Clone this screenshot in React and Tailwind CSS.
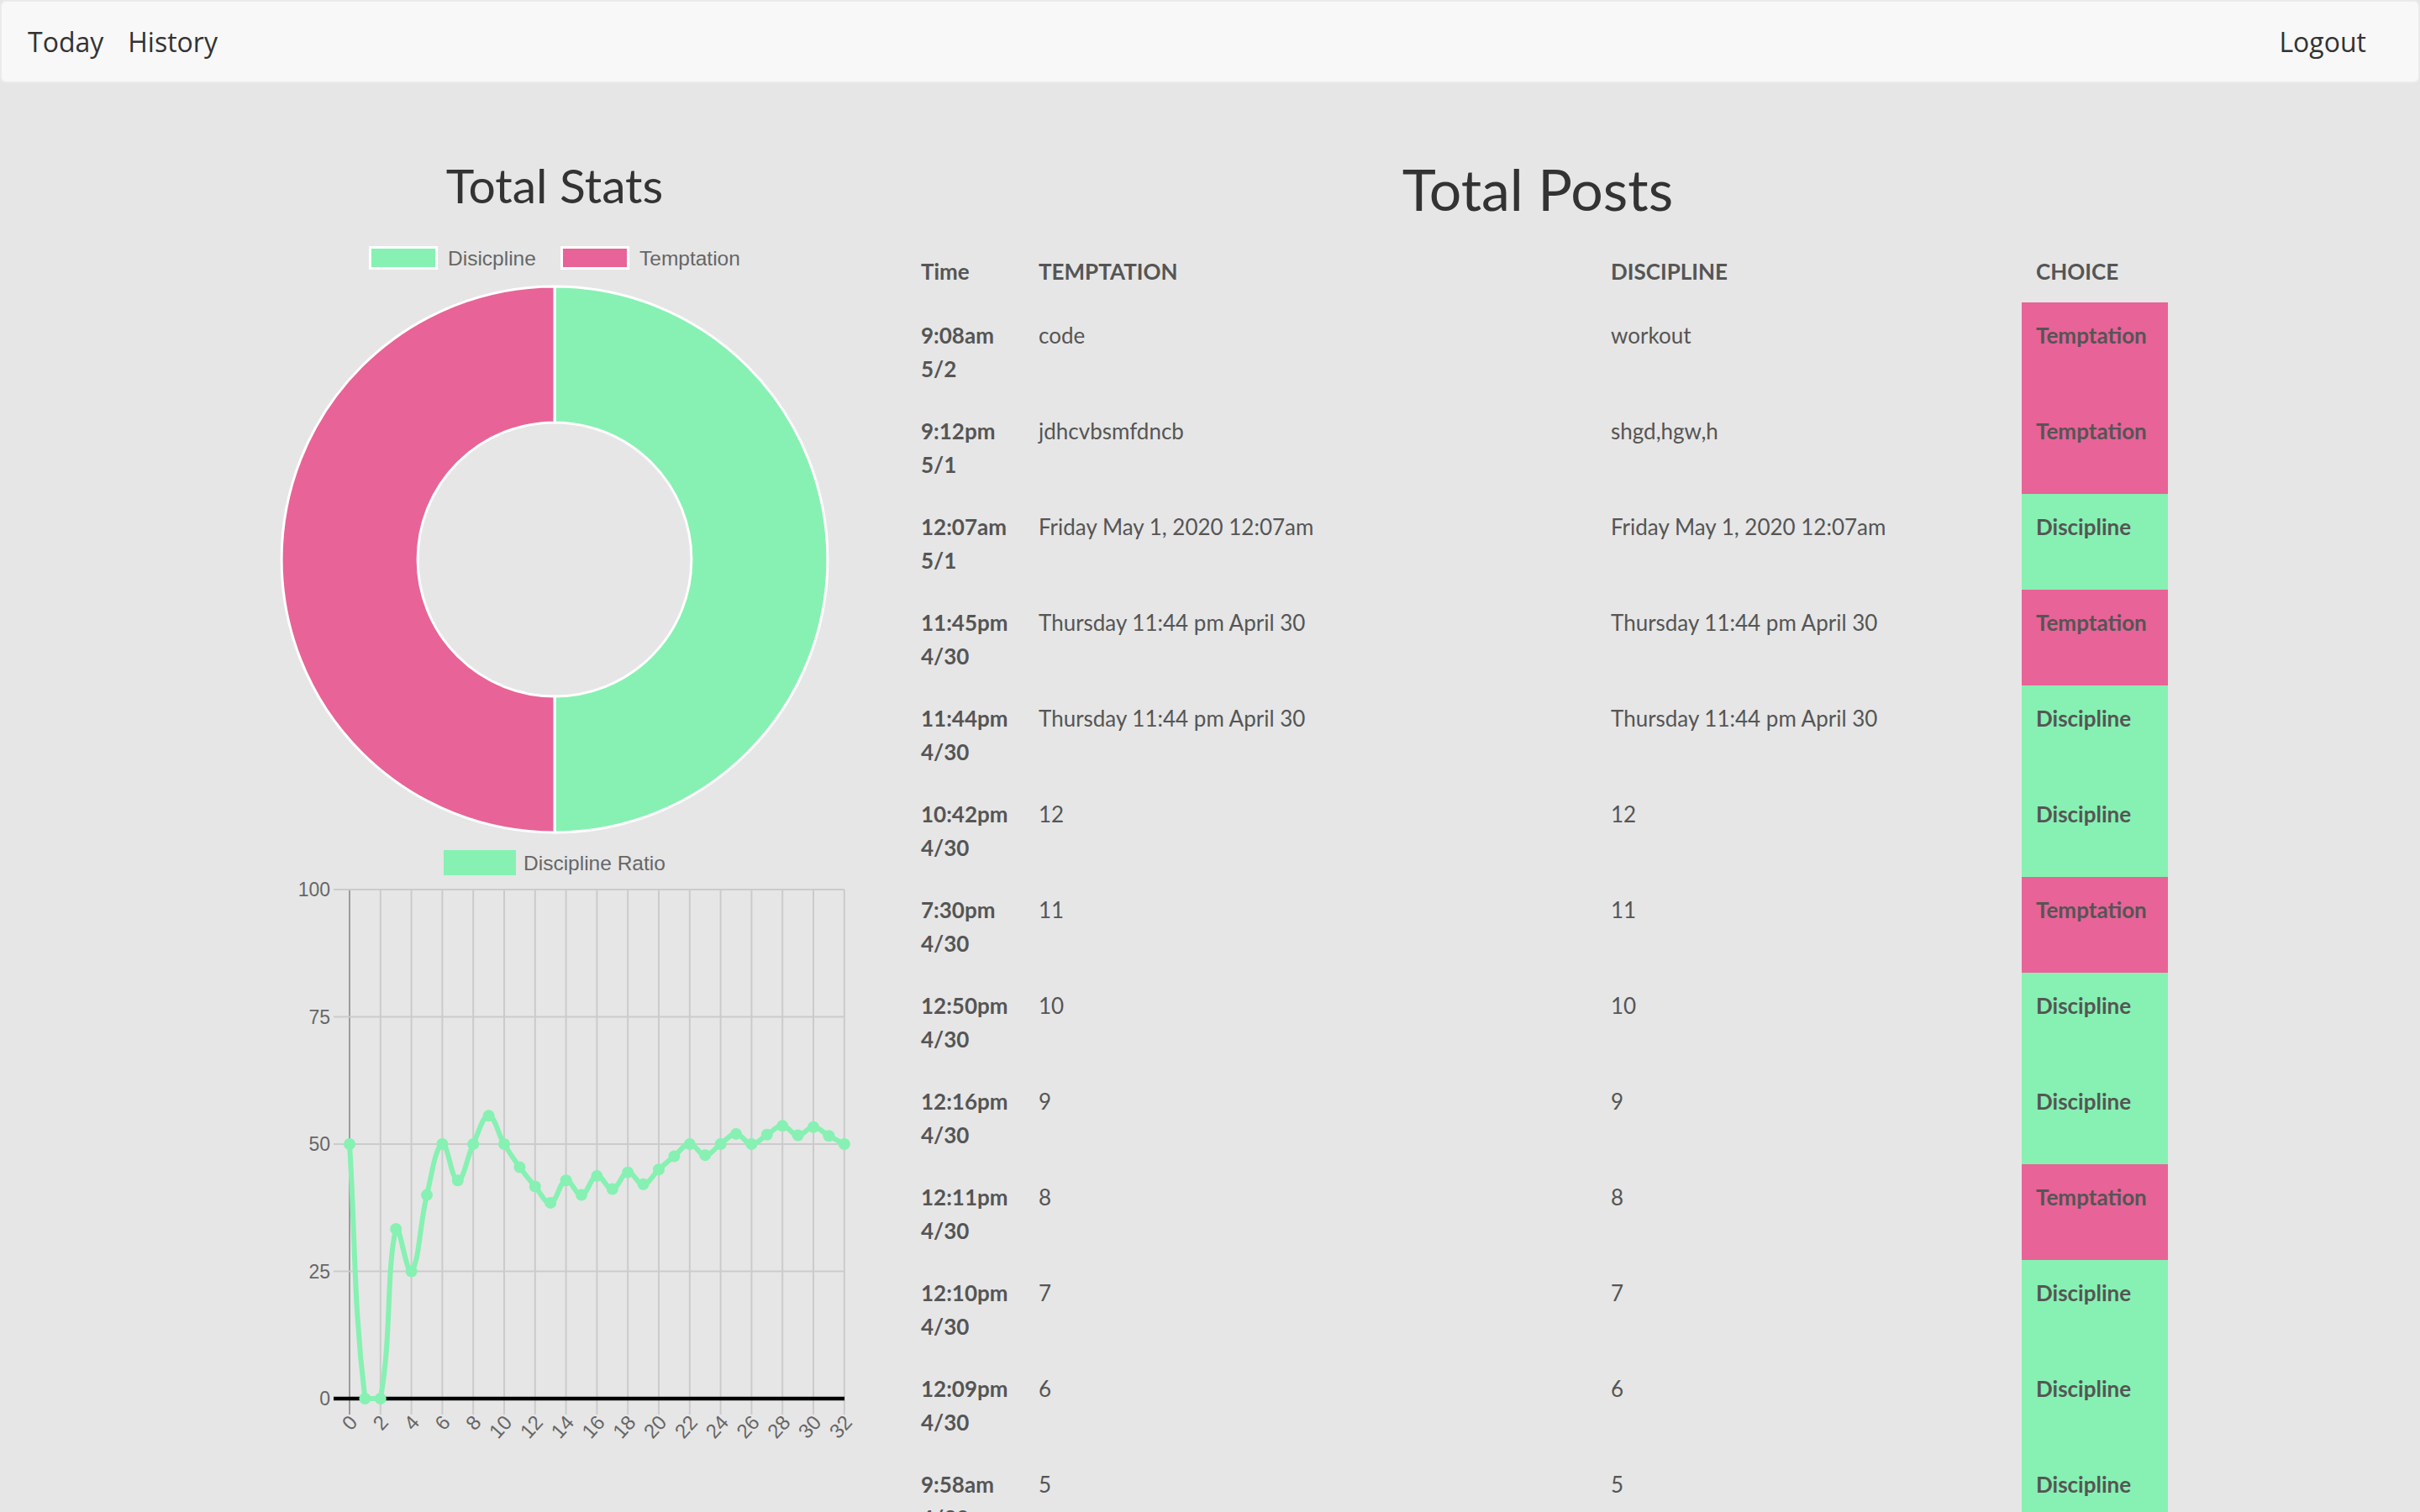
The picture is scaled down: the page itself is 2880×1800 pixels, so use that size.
import React from "react";

const GREEN = "#86f1b2";
const PINK = "#e86397";

const rows = [
  ["9:08am", "5/2", "code", "workout", "T"],
  ["9:12pm", "5/1", "jdhcvbsmfdncb", "shgd,hgw,h", "T"],
  ["12:07am", "5/1", "Friday May 1, 2020 12:07am", "Friday May 1, 2020 12:07am", "D"],
  ["11:45pm", "4/30", "Thursday 11:44 pm April 30", "Thursday 11:44 pm April 30", "T"],
  ["11:44pm", "4/30", "Thursday 11:44 pm April 30", "Thursday 11:44 pm April 30", "D"],
  ["10:42pm", "4/30", "12", "12", "D"],
  ["7:30pm", "4/30", "11", "11", "T"],
  ["12:50pm", "4/30", "10", "10", "D"],
  ["12:16pm", "4/30", "9", "9", "D"],
  ["12:11pm", "4/30", "8", "8", "T"],
  ["12:10pm", "4/30", "7", "7", "D"],
  ["12:09pm", "4/30", "6", "6", "D"],
  ["9:58am", "4/30", "5", "5", "D"],
  ["9:40am", "4/30", "4", "4", "D"],
  ["9:12am", "4/30", "3", "3", "T"],
];

const ratios = [
  50, 0, 0, 1 / 3, 1 / 4, 2 / 5, 3 / 6, 3 / 7, 4 / 8, 5 / 9, 5 / 10, 5 / 11, 5 / 12, 5 / 13,
  6 / 14, 6 / 15, 7 / 16, 7 / 17, 8 / 18, 8 / 19, 9 / 20, 10 / 21, 11 / 22, 11 / 23, 12 / 24,
  13 / 25, 13 / 26, 14 / 27, 15 / 28, 15 / 29, 16 / 30, 16 / 31, 16 / 32,
].map((v, i) => (i === 0 ? 50 : v * 100));

const X0 = 416;
const XSTEP = 18.4;
const Y0 = 1664;
const YTOP = 1058;
const YU = (Y0 - YTOP) / 100;

function buildPath() {
  const pts = ratios.map((v, i) => ({ x: X0 + i * XSTEP, y: Y0 - v * YU }));
  const t = 0.4;
  const cps = pts.map((p, i) => {
    const prev = pts[i - 1] || p;
    const next = pts[i + 1] || p;
    const d01 = Math.hypot(p.x - prev.x, p.y - prev.y);
    const d12 = Math.hypot(next.x - p.x, next.y - p.y);
    let s01 = d01 / (d01 + d12);
    let s12 = d12 / (d01 + d12);
    if (isNaN(s01)) s01 = 0;
    if (isNaN(s12)) s12 = 0;
    const fa = t * s01;
    const fb = t * s12;
    const cap = (y) => Math.max(YTOP, Math.min(Y0, y));
    return {
      prev: { x: p.x - fa * (next.x - prev.x), y: cap(p.y - fa * (next.y - prev.y)) },
      next: { x: p.x + fb * (next.x - prev.x), y: cap(p.y + fb * (next.y - prev.y)) },
    };
  });
  let d = `M ${pts[0].x} ${pts[0].y}`;
  for (let i = 1; i < pts.length; i++) {
    d += ` C ${cps[i - 1].next.x} ${cps[i - 1].next.y} ${cps[i].prev.x} ${cps[i].prev.y} ${pts[i].x} ${pts[i].y}`;
  }
  return { d, pts };
}

function Donut() {
  const cx = 660;
  const cy = 665;
  const R = 325;
  const r = 163;
  const right = `M ${cx} ${cy - R} A ${R} ${R} 0 0 1 ${cx} ${cy + R} L ${cx} ${cy + r} A ${r} ${r} 0 0 0 ${cx} ${cy - r} Z`;
  const left = `M ${cx} ${cy + R} A ${R} ${R} 0 0 1 ${cx} ${cy - R} L ${cx} ${cy - r} A ${r} ${r} 0 0 0 ${cx} ${cy + r} Z`;
  return (
    <svg width="726" height="746" viewBox="297 254 726 746" className="block">
      <g style={{ fontFamily: '"Liberation Sans", Arial, sans-serif' }} fontSize="24.5" fill="#666">
        <rect x="440.5" y="293.5" width="79" height="25" fill={GREEN} stroke="#fff" strokeWidth="3" />
        <text x="533" y="315">Disicpline</text>
        <rect x="668.5" y="293.5" width="79" height="25" fill={PINK} stroke="#fff" strokeWidth="3" />
        <text x="761" y="315">Temptation</text>
      </g>
      <path d={right} fill={GREEN} stroke="#fff" strokeWidth="3" strokeLinejoin="round" />
      <path d={left} fill={PINK} stroke="#fff" strokeWidth="3" strokeLinejoin="round" />
    </svg>
  );
}

function LineChart() {
  const { d, pts } = buildPath();
  const vlines = Array.from({ length: 17 }, (_, k) => X0 + k * 2 * XSTEP);
  const ylabels = [100, 75, 50, 25, 0];
  return (
    <svg width="726" height="760" viewBox="297 1000 726 760" className="block">
      <g style={{ fontFamily: '"Liberation Sans", Arial, sans-serif' }} fontSize="23" fill="#666">
        <rect x="528" y="1011" width="86" height="30" fill={GREEN} />
        <text x="623" y="1035" fontSize="24.5">Discipline Ratio</text>
        {vlines.map((x, k) => (
          <line key={k} x1={x} y1={YTOP} x2={x} y2={1683} stroke={k === 0 ? "#9c9c9c" : "#cbcbcb"} strokeWidth="2" />
        ))}
        {ylabels.slice(0, 4).map((v) => (
          <line key={v} x1={397} y1={Y0 - v * YU} x2={1005} y2={Y0 - v * YU} stroke="#cbcbcb" strokeWidth="2" />
        ))}
        <line x1={397} y1={Y0} x2={1005} y2={Y0} stroke="#000" strokeWidth="4.5" />
        {ylabels.map((v) => (
          <text key={v} x={393} y={Y0 - v * YU + 8} textAnchor="end">
            {v}
          </text>
        ))}
        {vlines.map((x, k) => (
          <text
            key={k}
            x={0}
            y={0}
            fontSize="24"
            textAnchor="end"
            dominantBaseline="middle"
            transform={`translate(${x + 6} ${1689}) rotate(-48)`}
          >
            {k * 2}
          </text>
        ))}
      </g>
      <path d={d} fill="none" stroke={GREEN} strokeWidth="6" strokeLinejoin="round" />
      {pts.map((p, i) => (
        <circle key={i} cx={p.x} cy={p.y} r="7" fill={GREEN} />
      ))}
    </svg>
  );
}

export default function App() {
  return (
    <div className="min-h-screen bg-[#e6e6e6]" style={{ fontFamily: 'Lato, "Noto Sans", sans-serif' }}>
      <nav
        className="h-[99px] flex items-center justify-between bg-[#f8f8f8] border-2 border-[#ebebeb] rounded-[7px] pl-[31px] pr-[62px] text-[32px] text-[#333]"
        style={{ fontFamily: '"Open Sans", "Noto Sans", sans-serif' }}
      >
        <div className="flex gap-[29px]">
          <span>Today</span>
          <span>History</span>
        </div>
        <span>Logout</span>
      </nav>
      <div className="w-[2340px] mx-auto grid grid-cols-[780px_1560px]">
        <div className="px-[27px] pt-[87px]">
          <h2 className="text-center text-[57px] leading-[69px] text-[#333]">Total Stats</h2>
          <Donut />
          <LineChart />
        </div>
        <div className="px-[27px] pt-[83px]">
          <h1 className="text-center text-[68px] leading-[86px] text-[#333]">Total Posts</h1>
          <div className="mt-[16px] text-[26px] leading-[40px] text-[#555]">
            <div className="grid grid-cols-[140px_681px_508px_174px] h-[76px] font-bold">
              <div className="pl-[19px] pt-[19px]">Time</div>
              <div className="pl-[19px] pt-[19px]">TEMPTATION</div>
              <div className="pl-[19px] pt-[19px]">DISCIPLINE</div>
              <div className="pl-[17px] pt-[19px]">CHOICE</div>
            </div>
            {rows.map((r, i) => (
              <div key={i} className="grid grid-cols-[140px_681px_508px_174px] h-[114px]">
                <div className="pl-[19px] pt-[19px] font-bold">
                  <div>{r[0]}</div>
                  <div>{r[1]}</div>
                </div>
                <div className="pl-[19px] pt-[19px]">{r[2]}</div>
                <div className="pl-[19px] pt-[19px]">{r[3]}</div>
                <div className={`pl-[17px] pt-[19px] font-bold ${r[4] === "T" ? "bg-[#e86397]" : "bg-[#86f1b2]"}`}>
                  {r[4] === "T" ? "Temptation" : "Discipline"}
                </div>
              </div>
            ))}
          </div>
        </div>
      </div>
    </div>
  );
}
